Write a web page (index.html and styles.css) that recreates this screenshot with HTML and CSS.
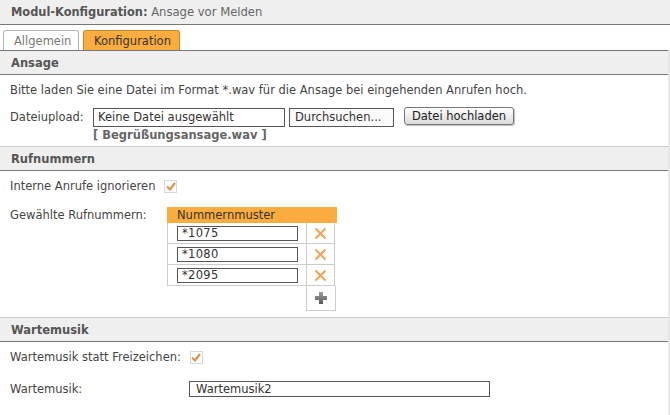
FILE: index.html
```html
<!DOCTYPE html>
<html>
<head>
<meta charset="utf-8">
<link rel="stylesheet" href="styles.css">
</head>
<body>
<div class="topbar"><b>Modul-Konfiguration:</b> <span>Ansage vor Melden</span></div>
<div class="tabs">
  <div class="tab">Allgemein</div>
  <div class="tab active">Konfiguration</div>
</div>
<div class="panel">
  <div class="sechead first">Ansage</div>
  <div class="sec">
    <p class="intro">Bitte laden Sie eine Datei im Format *.wav für die Ansage bei eingehenden Anrufen hoch.</p>
    <div class="uprow">
      <span class="lbl-up">Dateiupload:</span>
      <span class="filebox">Keine Datei ausgewählt</span>
      <span class="browse">Durchsuchen...</span>
      <span class="btn">Datei hochladen</span>
    </div>
    <div class="filelink">[ Begrüßungsansage.wav ]</div>
  </div>
  <div class="sechead">Rufnummern</div>
  <div class="sec sec2">
    <div class="chkrow"><span>Interne Anrufe ignorieren</span><span class="chk"><svg width="10" height="9" viewBox="0 0 10 9"><path d="M1 4.5 L4 7.5 L9 1" fill="none" stroke="#d9944a" stroke-width="2.2"/></svg></span></div>
    <div class="numrow">
      <span class="lbl-num">Gewählte Rufnummern:</span>
      <div class="numtable">
        <div class="nthead">Nummernmuster</div>
        <div class="ntrow"><div class="ntin"><span class="numin">*1075</span></div><div class="ntact"><svg width="13" height="13" viewBox="0 0 13 13"><path d="M1.5 1.5 L11.5 11.5 M11.5 1.5 L1.5 11.5" stroke="#f0a455" stroke-width="2"/></svg></div></div>
        <div class="ntrow"><div class="ntin"><span class="numin">*1080</span></div><div class="ntact"><svg width="13" height="13" viewBox="0 0 13 13"><path d="M1.5 1.5 L11.5 11.5 M11.5 1.5 L1.5 11.5" stroke="#f0a455" stroke-width="2"/></svg></div></div>
        <div class="ntrow"><div class="ntin"><span class="numin">*2095</span></div><div class="ntact"><svg width="13" height="13" viewBox="0 0 13 13"><path d="M1.5 1.5 L11.5 11.5 M11.5 1.5 L1.5 11.5" stroke="#f0a455" stroke-width="2"/></svg></div></div>
        <div class="ntrow last"><div class="ntempty"></div><div class="ntact add"><svg width="12" height="12" viewBox="0 0 12 12"><defs><linearGradient id="g" x1="0" y1="0" x2="0" y2="1"><stop offset="0" stop-color="#a0a0a0"/><stop offset="1" stop-color="#5a5a5a"/></linearGradient></defs><path d="M4 0 H8 V4 H12 V8 H8 V12 H4 V8 H0 V4 H4 Z" fill="url(#g)"/></svg></div></div>
      </div>
    </div>
  </div>
  <div class="sechead">Wartemusik</div>
  <div class="sec sec3">
    <div class="chkrow"><span>Wartemusik statt Freizeichen:</span><span class="chk"><svg width="10" height="9" viewBox="0 0 10 9"><path d="M1 4.5 L4 7.5 L9 1" fill="none" stroke="#d9944a" stroke-width="2.2"/></svg></span></div>
    <div class="wmrow"><span class="lbl-wm">Wartemusik:</span><span class="wmin">Wartemusik2</span></div>
  </div>
</div>
</body>
</html>
```
FILE: styles.css
```css
html, body { margin: 0; padding: 0; background: #fff; overflow: hidden; }
body { font-family: "DejaVu Sans", Verdana, sans-serif; font-size: 11.5px; color: #444; width: 670px; height: 415px; overflow: hidden; }
.topbar { height: 24px; background: #efefef; border-bottom: 1px solid #777; padding-left: 11px; line-height: 24px; white-space: nowrap; }
.topbar b { color: #555; font-weight: bold; font-size: 11.4px; }
.topbar span { color: #666; font-size: 11.6px; }
.tabs { height: 20px; padding-top: 5px; padding-left: 3px; display: flex; gap: 4px; }
.tab { height: 19px; line-height: 20px; border: 1px solid #b4b4b4; border-bottom: none; border-radius: 3px 3px 0 0; padding: 0 0 0 10px; color: #777; background: #fff; width: 64px; white-space: nowrap; }
.tab.active { background: #fbac3e; border-color: #c8882e; color: #333; width: 85px; }
.panel { border-right: 2px solid #e6e6e6; width: 668px; height: 385px; overflow: hidden; }
.sechead { height: 23px; line-height: 24px; background: #efefef; border-top: 1px solid #ccc; border-bottom: 1px solid #777; padding-left: 11px; font-weight: bold; color: #555; }
.sechead.first { border-top-color: #777; }
.sec { padding: 6px 0 0 10px; height: 65px; }
.intro { margin: 0; height: 21px; line-height: 16px; padding-top: 1px; color: #444; white-space: nowrap; }
.uprow { display: flex; align-items: center; height: 20px; margin-top: 4px; white-space: nowrap; }
.lbl-up { width: 83px; }
.filebox { width: 186px; height: 17px; line-height: 17px; border: 1px solid #555; padding-left: 4px; color: #333; overflow: hidden; }
.browse { margin-left: 4px; width: 98px; height: 17px; line-height: 17px; border: 1px solid #555; padding-left: 5px; background: #fafafa; color: #333; overflow: hidden; }
.btn { margin-left: 10px; width: 108px; height: 16px; line-height: 16px; border: 1px solid #777; border-radius: 3px; text-align: center; background: linear-gradient(#fdfdfd, #dcdcdc); box-shadow: 1px 1px 1px #bbb; color: #222; margin-top: -2px; }
.filelink { margin-left: 83px; margin-top: 1px; font-weight: bold; color: #666; line-height: 14px; }
.sec2 { height: 139px; padding-top: 7px; }
.chkrow { display: flex; align-items: center; height: 16px; gap: 9px; }
.chk { width: 11px; height: 11px; border: 1px solid #d8d8d8; display: flex; align-items: center; justify-content: center; background: #fff; }
.numrow { display: flex; margin-top: 13px; }
.lbl-num { width: 157px; padding-top: 1px; white-space: nowrap; }
.numtable { width: 170px; }
.nthead { height: 16px; line-height: 16px; background: #fbac3e; padding-left: 10px; color: #333; }
.ntrow { display: flex; height: 21px; }
.ntin { width: 139px; border-left: 1px solid #ccc; border-bottom: 1px solid #ccc; display: flex; align-items: center; padding-left: 9px; box-sizing: border-box; height: 21px; }
.numin { width: 115px; height: 13px; line-height: 13px; border: 1px solid #555; padding-left: 4px; color: #333; letter-spacing: 0.3px; }
.ntact { width: 29px; height: 21px; border-left: 1px solid #ccc; border-right: 1px solid #ccc; border-bottom: 1px solid #ccc; display: flex; align-items: center; justify-content: center; box-sizing: border-box; }
.ntempty { width: 139px; }
.ntrow.last { height: 25px; }
.ntact.add { height: 25px; width: 30px; }
.sec3 { padding-top: 7px; }
.wmrow { display: flex; align-items: center; margin-top: 16px; }
.lbl-wm { width: 179px; }
.wmin { width: 293px; height: 14px; line-height: 14px; border: 1px solid #555; padding-left: 6px; color: #333; }
```
